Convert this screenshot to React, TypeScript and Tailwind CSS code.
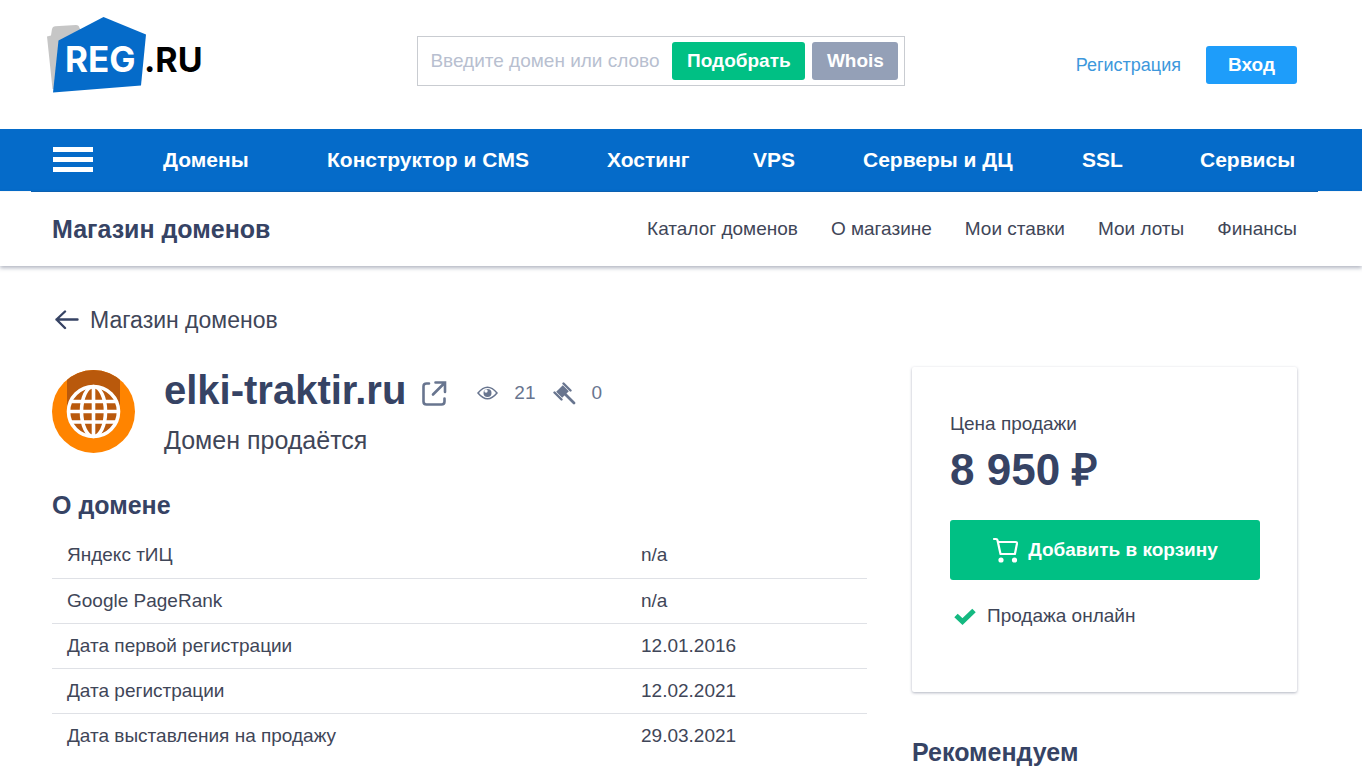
const mainNav = ["Домены", "Конструктор и CMS", "Хостинг", "VPS", "Серверы и ДЦ", "SSL", "Сервисы"];
const shopNav = ["Каталог доменов", "О магазине", "Мои ставки", "Мои лоты", "Финансы"];
const facts = [
  ["Яндекс тИЦ", "n/a"],
  ["Google PageRank", "n/a"],
  ["Дата первой регистрации", "12.01.2016"],
  ["Дата регистрации", "12.02.2021"],
  ["Дата выставления на продажу", "29.03.2021"],
];

function Logo() {
  return (
    <svg width="160" height="80" viewBox="0 0 160 80" role="img" aria-label="REG.RU">
      <path d="M0 20.500 L4 19.500 L5 13 Q5.500 10.500 8 10.300 L29 9 Q32 9 32.500 12 L36 18 L14 73 L5.500 73 Z" fill="#c6c6c6" />
      <path d="M11.500 24.500 L56.500 1 L99 18.500 L94 69.500 L6 76.500 Z" fill="#056bc9" />
      <text x="18" y="56" fontFamily="Inter, sans-serif" fontSize="35" fontWeight="700" fill="#fff">REG</text>
      <text x="97" y="56" fontFamily="Inter, sans-serif" fontSize="34" fontWeight="700" fill="#000">.RU</text>
    </svg>
  );
}

function GlobeBadge() {
  return (
    <svg width="83" height="83" viewBox="0 0 83 83" aria-hidden="true">
      <defs>
        <clipPath id="disc">
          <circle cx="41.500" cy="41.500" r="41.500" />
        </clipPath>
      </defs>
      <circle cx="41.500" cy="41.500" r="41.500" fill="#ff8400" />
      <path d="M15 0H68V41.500A26.500 26.500 0 0 1 15 41.500Z" fill="#b9590c" clipPath="url(#disc)" />
      <g fill="none" stroke="#fff" strokeWidth="3.600">
        <circle cx="41.500" cy="41.500" r="25" />
        <ellipse cx="41.500" cy="41.500" rx="12" ry="25" />
        <path d="M41.500 16.500V66.500M16.500 41.500H66.500M19.500 31.500H63.500M19.500 52H63.500" />
      </g>
    </svg>
  );
}

export default function App() {
  return (
    <div className="min-h-screen bg-white font-['Liberation_Sans',Arial,sans-serif] text-[19px] leading-6 text-[#3f4658]">
      <header>
        <div className="flex h-[129px] items-start justify-between pr-[65px] pl-[47px]">
          <a href="#" className="mt-4">
            <Logo />
          </a>
          <form className="mt-9 ml-10 flex h-[50px] w-[488px] items-center gap-[7px] border border-[#c9ccd1] pr-1.5 pl-3">
            <input
              type="text"
              aria-label="Введите домен или слово"
              placeholder="Введите домен или слово"
              className="min-w-0 flex-1 outline-none placeholder:text-[#b8bfd0]"
            />
            <button type="button" className="h-[38px] w-[133px] rounded-[3px] bg-[#00c084] font-bold text-white">
              Подобрать
            </button>
            <button type="button" className="h-[38px] w-[86px] rounded-[3px] bg-[#94a0b7] font-bold text-white">
              Whois
            </button>
          </form>
          <div className="mt-[46px] flex items-center gap-[25px]">
            <a href="#" className="text-lg text-[#3d98dc]">Регистрация</a>
            <button type="button" className="h-[38px] w-[91px] rounded-[3px] bg-[#1e9dfa] font-bold text-white">
              Вход
            </button>
          </div>
        </div>

        <div className="flex h-[62px] items-center bg-[#056bc9] pr-[65px] pb-px pl-[53px]">
          <button type="button" aria-label="Меню" className="flex w-10 flex-col gap-[5px]">
            <span className="h-[5px] bg-white" />
            <span className="h-[5px] bg-white" />
            <span className="h-[5px] bg-white" />
          </button>
          <nav className="ml-[70px] grid flex-1 grid-cols-[164fr_280fr_146fr_110fr_219fr_118fr_97fr] text-[21px] font-bold whitespace-nowrap text-white">
            {mainNav.map((item) => (
              <a key={item} href="#">{item}</a>
            ))}
          </nav>
        </div>
        <div className="mr-11 ml-[31px] h-px bg-[#0b62b4]" />

        <div className="flex h-[74px] items-center justify-between pr-[65px] pl-13 shadow-[0_2px_4px_rgba(60,70,100,0.4)]">
          <a href="#" className="text-[25px] font-bold text-[#364364]">Магазин доменов</a>
          <nav className="flex gap-[33px]">
            {shopNav.map((item) => (
              <a key={item} href="#">{item}</a>
            ))}
          </nav>
        </div>
      </header>

      <main className="pr-[65px] pl-13">
        <a href="#" className="flex h-[101px] items-center gap-[11px] pt-1.5 pl-[3px] text-[23px]">
          <svg width="24" height="20" viewBox="0 0 24 20" fill="none" stroke="#364364" strokeWidth="2.400" strokeLinecap="round" strokeLinejoin="round" aria-hidden="true">
            <path d="M22.500 9.500H1.500M10 1.500L1.500 9.500L10 18" />
          </svg>
          Магазин доменов
        </a>

        <div className="flex items-start justify-between gap-[45px]">
          <div className="min-w-0 flex-1">
            <div className="flex gap-[29px] pt-[3px]">
              <GlobeBadge />
              <div>
                <div className="flex h-10 items-center text-[#68758f]">
                  <h1 className="text-[40px] leading-10 font-bold text-[#364364]">elki-traktir.ru</h1>
                  <a href="#" aria-label="Открыть elki-traktir.ru" className="mt-1.5 ml-4">
                    <svg width="25" height="25" viewBox="0 0 25 25" fill="none" stroke="currentColor" strokeWidth="2.600" strokeLinecap="round">
                      <path d="M7 2.500H4.500Q1.500 2.500 1.500 5.500V20.500Q1.500 23.500 4.500 23.500H19.500Q22.500 23.500 22.500 20.500V17.500" />
                      <path d="M11 13.500L22 2.500M13.500 1.500H23V11" />
                    </svg>
                  </a>
                  <span className="mt-1.5 ml-[30px] flex items-center gap-4">
                    <svg width="21" height="14" viewBox="0 0 21 14" fill="none" aria-hidden="true">
                      <path d="M1 7Q10.500-4.500 20 7Q10.500 18.500 1 7Z" stroke="currentColor" strokeWidth="1.500" />
                      <circle cx="10.500" cy="7" r="4" fill="currentColor" />
                      <circle cx="9" cy="5" r="1.700" fill="#fff" />
                    </svg>
                    21
                  </span>
                  <span className="mt-1.5 ml-[18px] flex items-center gap-[15px]">
                    <svg width="23" height="23" viewBox="0 0 23 23" aria-hidden="true" fill="none" stroke="currentColor" strokeWidth="2.400" strokeLinecap="round">
                      <path d="M10.500 1.500L17.500 8.500M1.500 10.500L8.500 17.500" />
                      <path d="M9.800 3.200L15.800 9.200L9.200 15.800L3.200 9.800Z" fill="currentColor" stroke="none" />
                      <path d="M12.500 12.500L21 21" strokeWidth="2.800" />
                    </svg>
                    0
                  </span>
                </div>
                <p className="mt-[18px] text-[25px]">Домен продаётся</p>
              </div>
            </div>

            <h2 className="mt-10 text-[25px] font-bold text-[#364364]">О домене</h2>
            <table className="mt-4 w-full text-left">
              <tbody>
                {facts.map(([name, value]) => (
                  <tr key={name} className="h-[45px] border-b border-[#dfe1e6] last:border-0">
                    <th scope="row" className="w-[574px] pl-[15px] font-normal">{name}</th>
                    <td className="pl-[15px]">{value}</td>
                  </tr>
                ))}
              </tbody>
            </table>
          </div>

          <aside className="w-[385px]">
            <section className="rounded-[2px] px-[38px] pt-[45px] pb-16 shadow-[0_1px_3px_rgba(60,70,100,0.4)]">
              <p>Цена продажи</p>
              <p className="mt-2 text-[44px] leading-[52px] font-bold text-[#364364]">8 950 ₽</p>
              <button type="button" className="mt-6 flex h-[60px] w-[310px] items-center justify-center gap-2.5 rounded-[3px] bg-[#00c084] font-bold text-white">
                <svg width="26" height="26" viewBox="0 0 26 26" fill="none" stroke="#fff" strokeWidth="2.200" strokeLinecap="round" strokeLinejoin="round" aria-hidden="true">
                  <path d="M2 2H4Q5.200 2 5.500 3.200L8.500 17H22.500M6 5H23.500Q25.200 5 24.900 7L22.900 17" />
                  <circle cx="9" cy="23" r="1.500" fill="#fff" />
                  <circle cx="22.500" cy="23" r="1.500" fill="#fff" />
                </svg>
                Добавить в корзину
              </button>
              <p className="mt-6 flex items-center gap-[11px] pl-1">
                <svg width="22" height="17" viewBox="0 0 22 17" fill="none" stroke="#14b981" strokeWidth="5" aria-hidden="true">
                  <path d="M2 7.500L8.500 13.500L20 2.500" />
                </svg>
                Продажа онлайн
              </p>
            </section>
            <h2 className="mt-12 text-[25px] font-bold text-[#364364]">Рекомендуем</h2>
          </aside>
        </div>
      </main>
    </div>
  );
}
